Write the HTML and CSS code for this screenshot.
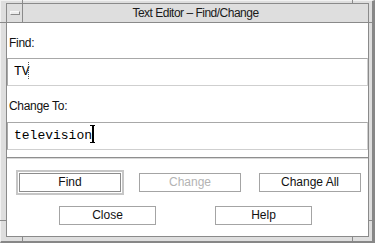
FILE: index.html
```html
<!DOCTYPE html>
<html lang="en">
<head>
    <meta charset="UTF-8">
    <meta name="viewport" content="width=device-width, initial-scale=1.0">
    <title>Text Editor - Find/Change</title>
    <link rel="stylesheet" href="styles.css">
</head>
<body>
    <div class="window">
        <span class="notch notch-v notch-tl"></span>
        <span class="notch notch-v notch-tr"></span>
        <span class="notch notch-v notch-bl"></span>
        <span class="notch notch-v notch-br"></span>
        <span class="notch notch-h notch-lt"></span>
        <span class="notch notch-h notch-lb"></span>
        <span class="notch notch-h notch-rt"></span>
        <span class="notch notch-h notch-rb"></span>

        <div class="frame">
            <div class="titlebar">
                <div class="menu-btn"><span class="menu-dash"></span></div>
                <div class="title">Text Editor – Find/Change</div>
            </div>
            <div class="content">
                <div class="label label-find">Find:</div>
                <div class="field"><span>TV</span><span class="caret caret-idle"></span></div>
                <div class="label label-change">Change To:</div>
                <div class="field"><span>television</span><span class="caret caret-active"></span></div>
                <div class="separator"></div>
                <div class="button-row row-main">
                    <button class="btn btn-default">Find</button>
                    <button class="btn" disabled>Change</button>
                    <button class="btn">Change All</button>
                </div>
                <div class="button-row row-secondary">
                    <button class="btn btn-small">Close</button>
                    <button class="btn btn-small">Help</button>
                </div>
            </div>
        </div>
    </div>
</body>
</html>
```

FILE: styles.css
```css
* {
    box-sizing: border-box;
}
body {
    margin: 0;
    font-family: "Liberation Sans", Arial, sans-serif;
    font-size: 12px;
    color: #111;
}
.window {
    position: relative;
    width: 375px;
    height: 243px;
    background: #dedede;
    border-top: 1px solid #f2f2f2;
    border-left: 1px solid #f2f2f2;
    border-right: 3px solid #878787;
    border-bottom: 2px solid #878787;
    padding: 2px 3px 4px 5px;
}

/* resize handle marks on the frame */
.notch {
    position: absolute;
    background: #8a8a8a;
}
.notch-v {
    width: 1px;
    height: 3px;
}
.notch-h {
    width: 6px;
    height: 1px;
}
.notch-tl { left: 21px; top: -1px; }
.notch-tr { left: 351px; top: -1px; }
.notch-bl { left: 21px; bottom: 0; height: 4px; }
.notch-br { left: 351px; bottom: 0; height: 4px; }
.notch-lt { left: -1px; top: 21px; }
.notch-lb { left: -1px; top: 219px; }
.notch-rt { left: 368px; top: 21px; width: 3px; }
.notch-rb { left: 368px; top: 219px; width: 3px; }

.frame {
    height: 100%;
    border: 1px solid #8a8a8a;
    display: flex;
    flex-direction: column;
}
.titlebar {
    height: 19px;
    display: flex;
    border-bottom: 1px solid #8a8a8a;
}
.menu-btn {
    width: 16px;
    border-right: 1px solid #8a8a8a;
    display: flex;
    align-items: center;
    justify-content: center;
}
.menu-dash {
    width: 10px;
    height: 4px;
    background: #ececec;
    border-top: 1px solid #f8f8f8;
    border-left: 1px solid #f8f8f8;
    border-right: 1px solid #8a8a8a;
    border-bottom: 1px solid #8a8a8a;
}
.title {
    flex: 1;
    text-align: center;
    line-height: 18px;
    letter-spacing: -0.5px;
    color: #1a1a1a;
}
.content {
    flex: 1;
    background: #fff;
}
.label {
    padding-left: 2px;
    padding-top: 13px;
    line-height: 14px;
    letter-spacing: -0.3px;
}
.label-find {
    height: 35px;
}
.label-change {
    height: 36px;
}
.field {
    height: 28px;
    border: 1px solid #a8a8a8;
    border-right-color: #cfcfcf;
    border-bottom-color: #cfcfcf;
    padding-left: 6px;
    font-family: "Liberation Mono", "Courier New", monospace;
    font-size: 13px;
    line-height: 26px;
    color: #000;
}
.caret {
    display: inline-block;
    vertical-align: -4px;
}
.caret-idle {
    width: 1px;
    height: 17px;
    margin-left: -2px;
    border-left: 1px dotted #555;
}
.caret-active {
    width: 5px;
    height: 18px;
    margin-left: -2px;
    border-top: 1px solid #000;
    border-bottom: 1px solid #000;
    background: linear-gradient(#000, #000) center / 2px 100% no-repeat;
}
.separator {
    margin-top: 7px;
    height: 2px;
    border-top: 1px solid #8e8e8e;
    border-bottom: 1px solid #d8d8d8;
}
.button-row {
    display: flex;
    margin-top: 14px;
}
.row-main {
    padding-left: 12px;
    gap: 18px;
}
.row-secondary {
    padding-left: 52px;
    gap: 59px;
}
.btn {
    width: 102px;
    height: 19px;
    padding: 0;
    border: 1px solid #a4a4a4;
    background: #fff;
    font-family: "Liberation Sans", Arial, sans-serif;
    font-size: 12px;
    line-height: 17px;
    color: #111;
}
.btn:disabled {
    color: #b4b4b4;
}
.btn-small {
    width: 97px;
}
.btn-default {
    border-color: #8c8c8c;
    outline: 2px solid #c6c6c6;
    outline-offset: 1px;
}
```
